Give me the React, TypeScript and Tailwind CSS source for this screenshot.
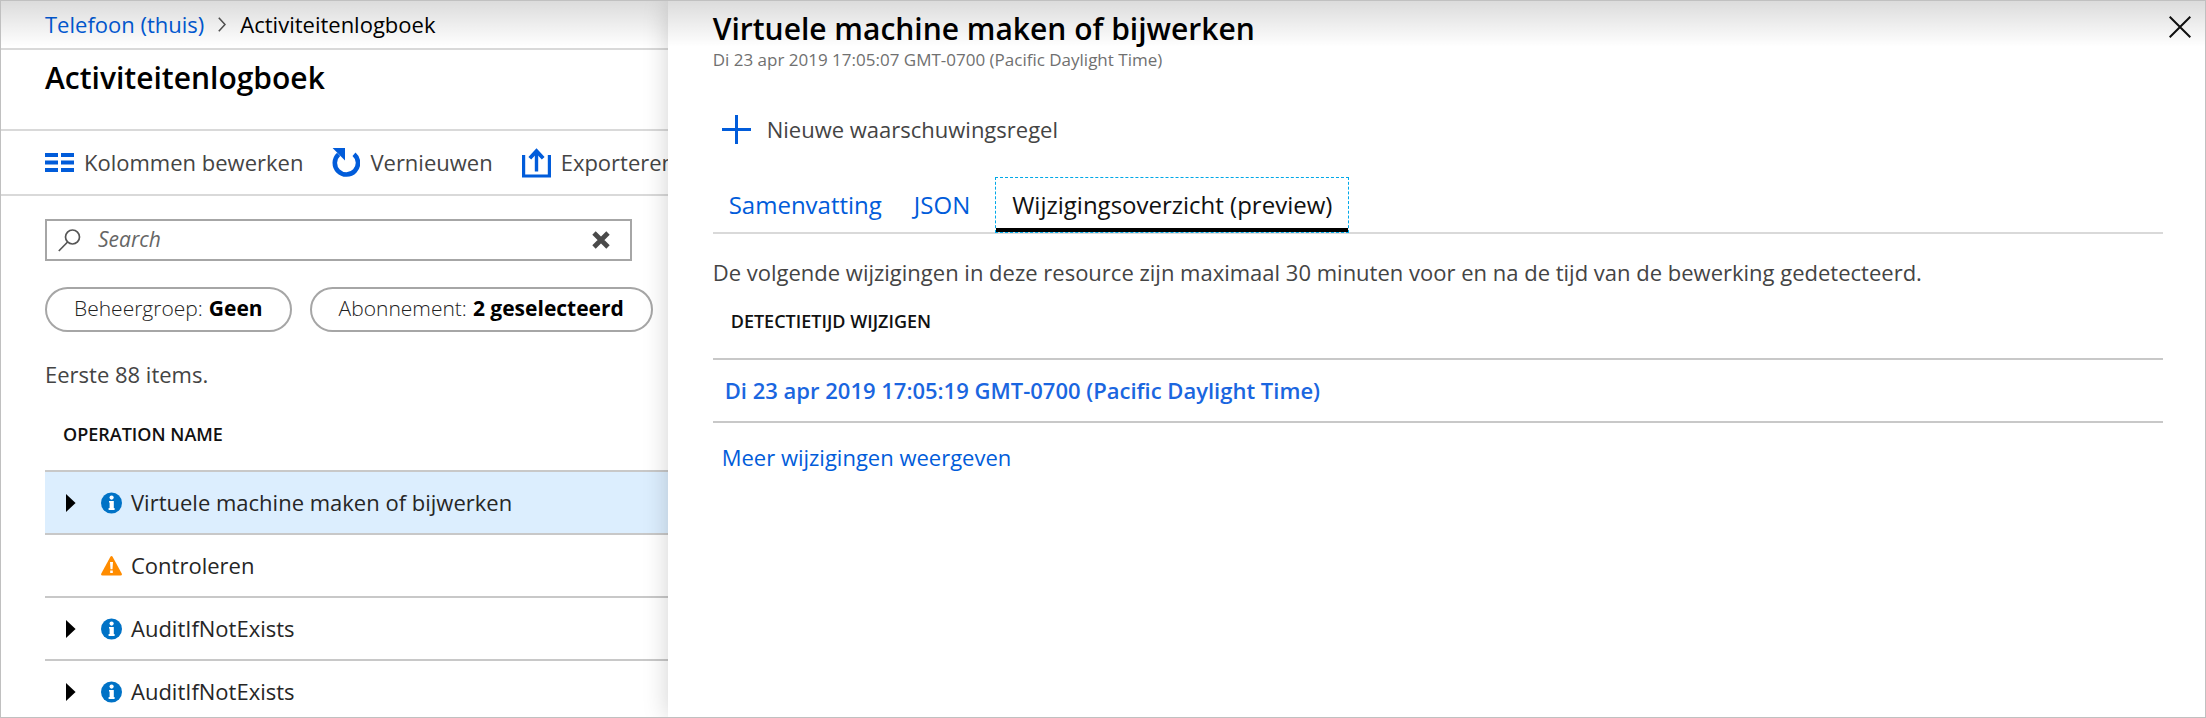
import type { ReactNode } from "react";

type Level = "info" | "warning";

interface Operation {
  name: string;
  level: Level;
  expandable: boolean;
  selected?: boolean;
}

const operations: Operation[] = [
  { name: "Virtuele machine maken of bijwerken", level: "info", expandable: true, selected: true },
  { name: "Controleren", level: "warning", expandable: false },
  { name: "AuditIfNotExists", level: "info", expandable: true },
  { name: "AuditIfNotExists", level: "info", expandable: true },
];

function ColumnsIcon() {
  return (
    <svg width="29" height="19" viewBox="0 0 29 19" aria-hidden="true">
      <path fill="#015cda" d="M0 0h13v4H0zM16 0h13v4H16zM0 7.5h13v4H0zM16 7.5h13v4H16zM0 15h13v4H0zM16 15h13v4H16z" />
    </svg>
  );
}

function RefreshIcon() {
  return (
    <svg width="28" height="30" viewBox="0 0 28 30" aria-hidden="true">
      <path d="M6.6 6.4A11.6 11.6 0 1 0 22 6.2" fill="none" stroke="#015cda" strokeWidth="4.6" />
      <path d="M.6 0H13v12.4z" fill="#015cda" />
    </svg>
  );
}

function ExportIcon() {
  return (
    <svg width="29" height="30" viewBox="0 0 29 30" fill="none" stroke="#015cda" aria-hidden="true">
      <path d="M1.6 7v21h25.8V7" strokeWidth="3.2" />
      <path d="M14.5 23.5V4" strokeWidth="3.4" />
      <path d="M7.8 10.3l6.7-7.2 6.7 7.2" strokeWidth="3.8" />
    </svg>
  );
}

function SearchIcon() {
  return (
    <svg width="23" height="23" viewBox="0 0 23 23" fill="none" stroke="#555" strokeWidth="1.7" aria-hidden="true">
      <circle cx="14.5" cy="8" r="7" />
      <path d="M9.6 13L.8 22" />
    </svg>
  );
}

function LevelIcon({ level }: { level: Level }) {
  return level === "info" ? (
    <svg width="21" height="22" viewBox="0 0 21 22" role="img" aria-label="Informatie" className="shrink-0">
      <circle cx="10.5" cy="11" r="10.5" fill="#0072c6" />
      <circle cx="10.6" cy="5.6" r="2.1" fill="#fff" />
      <path d="M8 9h4.8v7h.8v1.9H7.6V16h1v-5.4H8z" fill="#fff" />
    </svg>
  ) : (
    <svg width="21" height="22" viewBox="0 0 21 22" role="img" aria-label="Waarschuwing" className="shrink-0">
      <path d="M9.4 1.8q1.1-1.8 2.2 0l9.1 16.6q.8 2-1.2 2.2H1.5q-2-.2-1.2-2.2z" fill="#ff8c00" />
      <path d="M9 7h3l-.5 7.2h-2zM9.2 15.6h2.6V18H9.2z" fill="#fff" />
    </svg>
  );
}

function ToolbarButton({ icon, children }: { icon: ReactNode; children: ReactNode }) {
  return (
    <button type="button" className="flex shrink-0 items-center gap-[10px] whitespace-nowrap text-[#444]">
      {icon}
      {children}
    </button>
  );
}

function FilterPill({ label, value }: { label: string; value: string }) {
  return (
    <button
      type="button"
      className="flex h-[45px] shrink-0 items-center gap-[6px] rounded-full border-2 border-[#a6a6a6] bg-white px-[27px] pb-[2px] text-[21px] whitespace-nowrap"
    >
      <span className="font-light text-[#222]">{label}</span>
      <span className="font-bold text-black">{value}</span>
    </button>
  );
}

function ActivityLog() {
  return (
    <main className="flex w-[30.25%] shrink-0 flex-col overflow-hidden">
      <nav aria-label="Kruimelpad" className="flex h-[49px] shrink-0 items-center gap-[14px] border-b-2 border-[#d9d9d9] pl-[44px]">
        <a href="#thuis" className="text-[#015cda]">Telefoon (thuis)</a>
        <svg width="8" height="15" viewBox="0 0 8 15" fill="none" stroke="#555" strokeWidth="1.6" aria-hidden="true">
          <path d="M.8.8L7 7.5.8 14.2" />
        </svg>
        <span className="text-black">Activiteitenlogboek</span>
      </nav>
      <header className="h-[81px] shrink-0 border-b-2 border-[#d9d9d9] pt-2 pl-[44px]">
        <h1 className="text-[30px] leading-10 font-semibold text-black">Activiteitenlogboek</h1>
      </header>
      <div className="flex h-[65px] shrink-0 items-center gap-[29px] border-b-2 border-[#d9d9d9] pl-[44px]">
        <ToolbarButton icon={<ColumnsIcon />}>Kolommen bewerken</ToolbarButton>
        <ToolbarButton icon={<RefreshIcon />}>Vernieuwen</ToolbarButton>
        <ToolbarButton icon={<ExportIcon />}>Exporteren</ToolbarButton>
      </div>
      <div className="flex shrink-0 flex-col pl-[44px]">
        <div className="mt-[23px] mr-9 flex h-[42px] items-center gap-[17px] border-2 border-[#a6a6a6] bg-white pr-5 pl-[11px]">
          <label htmlFor="search"><SearchIcon /></label>
          <input
            id="search"
            type="text"
            aria-label="Search"
            placeholder="Search"
            className="min-w-0 flex-1 bg-transparent text-[21px] italic outline-none placeholder:text-[#666]"
          />
          <button type="button" aria-label="Wissen">
            <svg width="18" height="18" viewBox="0 0 18 18" fill="none" stroke="#4a4a4a" strokeWidth="4.8" aria-hidden="true">
              <path d="M2 2l14 14M16 2L2 16" />
            </svg>
          </button>
        </div>
        <div className="mt-[26px] flex gap-[18px]">
          <FilterPill label="Beheergroep:" value="Geen" />
          <FilterPill label="Abonnement:" value="2 geselecteerd" />
        </div>
        <p className="mt-[26px] leading-8 text-[#444]">Eerste 88 items.</p>
        <table className="w-full border-separate border-spacing-0">
          <thead>
            <tr>
              <th scope="col" className="h-20 pt-2 pl-[18px] text-left text-[18px] font-semibold text-[#111]">
                OPERATION NAME
              </th>
            </tr>
          </thead>
          <tbody>
            {operations.map((op, i) => (
              <tr key={i} className={op.selected ? "bg-[#dceefe]" : "bg-white"}>
                <td className="h-[63px] border-t-2 border-[#c8c8c8] p-0">
                  <div className="flex items-center pl-[21px]">
                    <div className="flex w-[35px] shrink-0">
                      {op.expandable && (
                        <button type="button" aria-label="Uitvouwen">
                          <svg width="10" height="18" viewBox="0 0 10 18" aria-hidden="true">
                            <path d="M0 0l9.6 9L0 18z" fill="#000" />
                          </svg>
                        </button>
                      )}
                    </div>
                    <LevelIcon level={op.level} />
                    <span className="pl-[9px] whitespace-nowrap text-[#262626]">{op.name}</span>
                  </div>
                </td>
              </tr>
            ))}
          </tbody>
        </table>
      </div>
    </main>
  );
}

function DetailPanel() {
  return (
    <aside className="relative flex min-w-0 flex-1 flex-col bg-white shadow-[0_0_24px_rgba(0,0,0,0.18)]">
      <header className="flex items-start justify-between pt-[9px] pr-[14px] pl-[45px]">
        <div>
          <h2 className="text-[30px] leading-[38px] font-semibold text-black">Virtuele machine maken of bijwerken</h2>
          <p className="text-[17px] leading-6 text-[#707070]">Di 23 apr 2019 17:05:07 GMT-0700 (Pacific Daylight Time)</p>
        </div>
        <button type="button" aria-label="Sluiten" className="pt-[6px]">
          <svg width="22" height="22" viewBox="0 0 22 22" fill="none" stroke="#111" strokeWidth="2" aria-hidden="true">
            <path d="M.7.7l20.6 20.6M21.3.7L.7 21.3" />
          </svg>
        </button>
      </header>
      <div className="flex flex-col pr-[42px] pl-[45px]">
        <button type="button" className="mt-[41px] flex h-8 items-center gap-4 self-start pl-[9px] text-[#444]">
          <svg width="29" height="29" viewBox="0 0 29 29" fill="none" stroke="#015cda" strokeWidth="3" aria-hidden="true">
            <path d="M14.5 0v29M0 14.5h29" />
          </svg>
          Nieuwe waarschuwingsregel
        </button>
        <div role="tablist" className="mt-8 flex h-[57px] border-b-2 border-[#d9d9d9] text-[24px]">
          <button type="button" role="tab" aria-selected="false" className="px-4 text-[#015cda]">Samenvatting</button>
          <button type="button" role="tab" aria-selected="false" className="px-4 text-[#015cda]">JSON</button>
          <button
            type="button"
            role="tab"
            aria-selected="true"
            className="relative ml-[9px] h-14 border border-dashed border-[#00a8e8] text-[#111]"
          >
            <span className="flex h-full items-center border-b-4 border-black px-4 pt-[3px]">Wijzigingsoverzicht (preview)</span>
          </button>
        </div>
        <p className="mt-[22px] leading-8 text-[#444]">
          De volgende wijzigingen in deze resource zijn maximaal 30 minuten voor en na de tijd van de bewerking gedetecteerd.
        </p>
        <table className="w-full border-separate border-spacing-0">
          <thead>
            <tr>
              <th scope="col" className="h-[70px] pb-1 pl-[18px] text-left text-[18px] font-semibold text-[#111]">
                DETECTIETIJD WIJZIGEN
              </th>
            </tr>
          </thead>
          <tbody>
            <tr>
              <td className="h-[65px] border-y-2 border-[#c8c8c8] pl-3">
                <a href="#wijziging" className="font-semibold text-[#1a66e0]">
                  Di 23 apr 2019 17:05:19 GMT-0700 (Pacific Daylight Time)
                </a>
              </td>
            </tr>
          </tbody>
        </table>
        <a href="#meer" className="mt-[18px] ml-[9px] self-start leading-8 text-[#015cda]">Meer wijzigingen weergeven</a>
      </div>
    </aside>
  );
}

export default function App() {
  return (
    <div className="relative flex h-screen overflow-hidden border border-[#c0c0c0] bg-white font-['Open_Sans','Noto_Sans',sans-serif] text-[22px]">
      <ActivityLog />
      <DetailPanel />
      <div className="pointer-events-none absolute inset-x-0 top-0 h-[46px] bg-linear-to-b from-black/14 to-transparent" />
    </div>
  );
}
